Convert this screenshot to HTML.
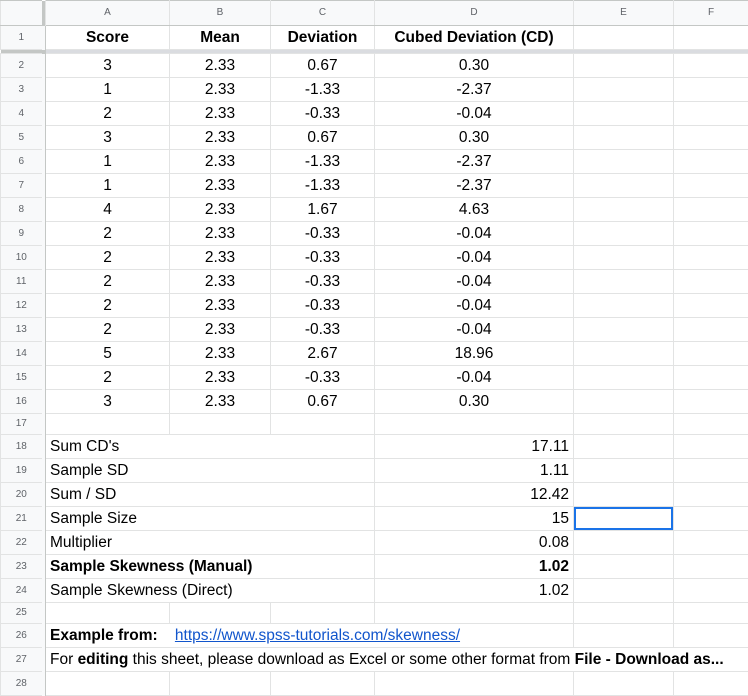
<!DOCTYPE html>
<html><head><meta charset="utf-8"><style>
body{margin:0;background:#fff;width:748px;height:682px;overflow:hidden;font-family:"Liberation Sans",Arial,sans-serif;}
table{border-collapse:collapse;table-layout:fixed;width:748px;}
td{border:1px solid #e2e3e3;padding:0 4px;font-size:15.5px;color:#000;white-space:nowrap;overflow:visible;height:23px;line-height:20px;}
td.rn{font-size:10px;color:#5f6368;text-align:center;background:#f8f9fa;border-color:#e2e3e3;border-right:none;padding:0;}
td.fz{background:#f8f9fa;border:none;border-right:1px solid #c4c7c5;padding:0;}
tr.hd td{background:#f8f9fa;font-size:10px;color:#5f6368;text-align:center;height:24px;border-color:#c4c7c5;border-left-color:#e2e3e3;border-right-color:#e2e3e3;}
tr.hd td.fz{background:#c4c7c5;}
tr.fzr td{height:3px;background:#dadce0;border:none;padding:0;line-height:3px;}
.c{text-align:center}.r{text-align:right}.b{font-weight:bold}
tr.s td{height:20px}
a{color:#1155cc;}
</style></head><body>
<table>
<colgroup><col style="width:41px"><col style="width:4px"><col style="width:124px"><col style="width:101px"><col style="width:104px"><col style="width:199px"><col style="width:100px"><col style="width:75px"></colgroup>
<tr class="hd"><td style="border-right:none"></td><td class="fz"></td><td>A</td><td>B</td><td>C</td><td>D</td><td>E</td><td>F</td></tr>
<tr><td class="rn">1</td><td class="fz"></td><td class="c b">Score</td><td class="c b">Mean</td><td class="c b">Deviation</td><td class="c b">Cubed Deviation (CD)</td><td></td><td></td></tr>
<tr class="fzr"><td style="background:#c4c7c5"></td><td style="background:#c4c7c5"></td><td></td><td></td><td></td><td></td><td></td><td></td></tr>
<tr><td class="rn">2</td><td class="fz"></td><td class="c">3</td><td class="c">2.33</td><td class="c">0.67</td><td class="c">0.30</td><td></td><td></td></tr>
<tr><td class="rn">3</td><td class="fz"></td><td class="c">1</td><td class="c">2.33</td><td class="c">-1.33</td><td class="c">-2.37</td><td></td><td></td></tr>
<tr><td class="rn">4</td><td class="fz"></td><td class="c">2</td><td class="c">2.33</td><td class="c">-0.33</td><td class="c">-0.04</td><td></td><td></td></tr>
<tr><td class="rn">5</td><td class="fz"></td><td class="c">3</td><td class="c">2.33</td><td class="c">0.67</td><td class="c">0.30</td><td></td><td></td></tr>
<tr><td class="rn">6</td><td class="fz"></td><td class="c">1</td><td class="c">2.33</td><td class="c">-1.33</td><td class="c">-2.37</td><td></td><td></td></tr>
<tr><td class="rn">7</td><td class="fz"></td><td class="c">1</td><td class="c">2.33</td><td class="c">-1.33</td><td class="c">-2.37</td><td></td><td></td></tr>
<tr><td class="rn">8</td><td class="fz"></td><td class="c">4</td><td class="c">2.33</td><td class="c">1.67</td><td class="c">4.63</td><td></td><td></td></tr>
<tr><td class="rn">9</td><td class="fz"></td><td class="c">2</td><td class="c">2.33</td><td class="c">-0.33</td><td class="c">-0.04</td><td></td><td></td></tr>
<tr><td class="rn">10</td><td class="fz"></td><td class="c">2</td><td class="c">2.33</td><td class="c">-0.33</td><td class="c">-0.04</td><td></td><td></td></tr>
<tr><td class="rn">11</td><td class="fz"></td><td class="c">2</td><td class="c">2.33</td><td class="c">-0.33</td><td class="c">-0.04</td><td></td><td></td></tr>
<tr><td class="rn">12</td><td class="fz"></td><td class="c">2</td><td class="c">2.33</td><td class="c">-0.33</td><td class="c">-0.04</td><td></td><td></td></tr>
<tr><td class="rn">13</td><td class="fz"></td><td class="c">2</td><td class="c">2.33</td><td class="c">-0.33</td><td class="c">-0.04</td><td></td><td></td></tr>
<tr><td class="rn">14</td><td class="fz"></td><td class="c">5</td><td class="c">2.33</td><td class="c">2.67</td><td class="c">18.96</td><td></td><td></td></tr>
<tr><td class="rn">15</td><td class="fz"></td><td class="c">2</td><td class="c">2.33</td><td class="c">-0.33</td><td class="c">-0.04</td><td></td><td></td></tr>
<tr><td class="rn">16</td><td class="fz"></td><td class="c">3</td><td class="c">2.33</td><td class="c">0.67</td><td class="c">0.30</td><td></td><td></td></tr>
<tr class="s"><td class="rn">17</td><td class="fz"></td><td></td><td></td><td></td><td></td><td></td><td></td></tr>
<tr><td class="rn">18</td><td class="fz"></td><td colspan="3" style="border-right:none">Sum CD's</td><td class="r">17.11</td><td></td><td></td></tr>
<tr><td class="rn">19</td><td class="fz"></td><td colspan="3" style="border-right:none">Sample SD</td><td class="r">1.11</td><td></td><td></td></tr>
<tr><td class="rn">20</td><td class="fz"></td><td colspan="3" style="border-right:none">Sum / SD</td><td class="r">12.42</td><td></td><td></td></tr>
<tr><td class="rn">21</td><td class="fz"></td><td colspan="3" style="border-right:none">Sample Size</td><td class="r">15</td><td style="box-shadow:inset 0 0 0 2px #1a73e8"></td><td></td></tr>
<tr><td class="rn">22</td><td class="fz"></td><td colspan="3" style="border-right:none">Multiplier</td><td class="r">0.08</td><td></td><td></td></tr>
<tr><td class="rn">23</td><td class="fz"></td><td colspan="3" class="b" style="border-right:none">Sample Skewness (Manual)</td><td class="r b">1.02</td><td></td><td></td></tr>
<tr><td class="rn">24</td><td class="fz"></td><td colspan="3" style="border-right:none">Sample Skewness (Direct)</td><td class="r">1.02</td><td></td><td></td></tr>
<tr class="s"><td class="rn">25</td><td class="fz"></td><td></td><td></td><td></td><td></td><td></td><td></td></tr>
<tr><td class="rn">26</td><td class="fz"></td><td colspan="4" style="border-right:none"><b>Example from:</b>&nbsp;&nbsp;&nbsp;&nbsp;<a href="#">https://www.spss-tutorials.com/skewness/</a></td><td></td><td></td></tr>
<tr><td class="rn">27</td><td class="fz"></td><td colspan="6">For <b>editing</b> this sheet, please download as Excel or some other format from <b>File - Download as...</b></td></tr>
<tr><td class="rn">28</td><td class="fz"></td><td></td><td></td><td></td><td></td><td></td><td></td></tr>
</table>
</body></html>
